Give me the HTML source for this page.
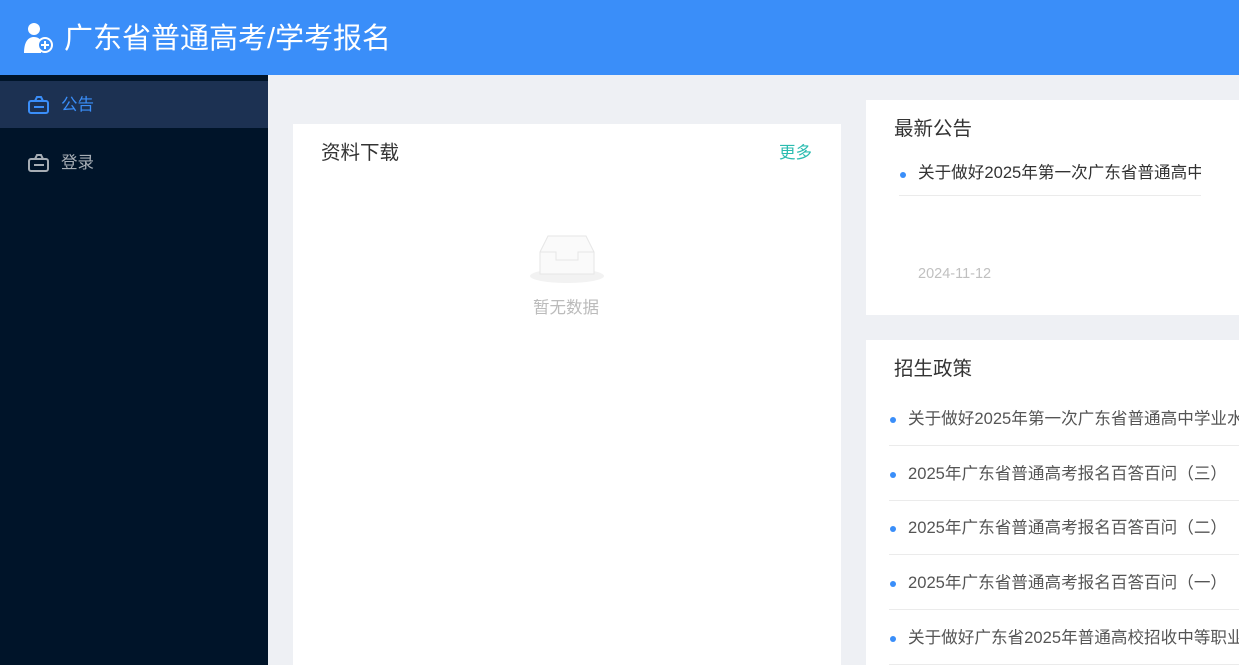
<!DOCTYPE html>
<html><head><meta charset="utf-8"><style>
*{margin:0;padding:0;box-sizing:border-box}
html,body{width:1239px;height:665px;overflow:hidden}
body{background:#eef0f4;font-family:"Liberation Sans","Noto Sans CJK SC",sans-serif;position:relative}
.hd{position:absolute;left:0;top:0;width:1239px;height:75px;background:#3a8ef9;color:#fff}
.hd .t{position:absolute;left:64px;top:19px;font-size:29px;line-height:40px}
.sb{position:absolute;left:0;top:75px;width:268px;height:590px;background:#001429}
.it{position:absolute;left:0;width:268px;height:47px;font-size:16.5px;line-height:48px;padding-left:61px;color:#a6adb4}
.it.a{background:#1c3152;color:#3a8ef9}
.it svg{position:absolute;left:28px;top:15px}
.card{position:absolute;background:#fff}
.ct{position:absolute;font-size:19.5px;color:#333}
.li{position:absolute;left:23px;width:400px;height:55px;border-bottom:1px solid #ebebeb;font-size:16.6px;color:#555;line-height:55px;padding-left:19px;white-space:nowrap;overflow:hidden}
.li:before{content:"";position:absolute;left:1px;top:26px;width:6px;height:6px;border-radius:50%;background:#3a8ef9}
</style></head><body>
<div class="hd">
<svg style="position:absolute;left:24px;top:22px" width="32" height="32" viewBox="0 0 32 32"><circle cx="10" cy="7" r="6" fill="#fff"/><path d="M0 31 C0 20 4 15 10 15 C14 15 16 17 17 19 L17 31Z" fill="#fff"/><circle cx="21" cy="23" r="8" fill="#fff"/><circle cx="21" cy="23" r="6" fill="#3a8ef9"/><path d="M21 19v8M17 23h8" stroke="#fff" stroke-width="2"/></svg>
<div class="t">广东省普通高考/学考报名</div></div>
<div class="sb">
<div class="it a" style="top:6px"><svg width="22" height="19" viewBox="0 0 22 19"><rect x="1" y="5" width="19" height="12" rx="2" fill="none" stroke="#3a8ef9" stroke-width="2"/><path d="M7 5 L9 1 H13 L15 5" fill="none" stroke="#3a8ef9" stroke-width="2"/><path d="M6 11h10" stroke="#3a8ef9" stroke-width="2"/></svg>公告</div>
<div class="it" style="top:64px"><svg width="22" height="19" viewBox="0 0 22 19"><rect x="1" y="5" width="19" height="12" rx="2" fill="none" stroke="#a6adb4" stroke-width="2"/><path d="M7 5 L9 1 H13 L15 5" fill="none" stroke="#a6adb4" stroke-width="2"/><path d="M6 11h10" stroke="#a6adb4" stroke-width="2"/></svg>登录</div>
</div>
<div class="card" style="left:293px;top:124px;width:548px;height:541px">
<div class="ct" style="left:28px;top:12px">资料下载</div>
<div style="position:absolute;left:486px;top:15px;font-size:16.5px;color:#2bbcb0">更多</div>
<svg style="position:absolute;left:235px;top:108px" width="78" height="52" viewBox="0 0 78 52"><ellipse cx="39" cy="44" rx="37" ry="7" fill="#f2f2f2"/><path d="M12 20 L20 4 H58 L66 20 V42 H12Z" fill="#fafafa" stroke="#e6e6e6"/><path d="M12 20 H28 V28 H50 V20 H66" fill="none" stroke="#e6e6e6"/></svg>
<div style="position:absolute;left:240px;top:170px;font-size:16.5px;color:#bbb">暂无数据</div>
</div>
<div class="card" style="left:866px;top:100px;width:380px;height:215px">
<div class="ct" style="left:28px;top:12px">最新公告</div>
<div class="li" style="top:46px;left:33px;width:302px;height:50px;line-height:54px;color:#333;padding-left:19px">关于做好2025年第一次广东省普通高中</div>
<div style="position:absolute;left:52px;top:166px;font-size:14.5px;color:#c0c0c0">2024-11-12</div>
</div>
<div class="card" style="left:866px;top:340px;width:380px;height:330px">
<div class="ct" style="left:28px;top:12px">招生政策</div>
<div class="li" style="top:51px">关于做好2025年第一次广东省普通高中学业水平</div>
<div class="li" style="top:106px">2025年广东省普通高考报名百答百问（三）</div>
<div class="li" style="top:160px">2025年广东省普通高考报名百答百问（二）</div>
<div class="li" style="top:215px">2025年广东省普通高考报名百答百问（一）</div>
<div class="li" style="top:270px">关于做好广东省2025年普通高校招收中等职业学校</div>
</div>
</body></html>
